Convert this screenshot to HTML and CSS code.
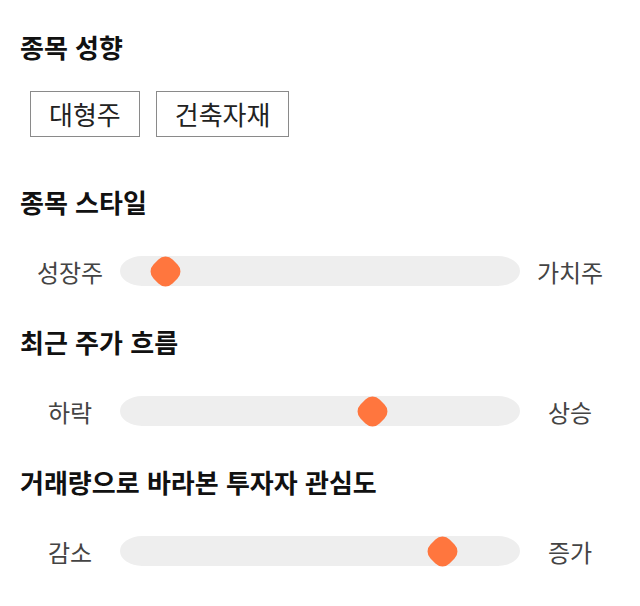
FILE: index.html
```html
<!DOCTYPE html>
<html lang="ko">
<head>
<meta charset="utf-8">
<link rel="stylesheet" href="styles.css">
</head>
<body>
<main class="page">
  <section class="group">
    <h2 class="title">종목 성향</h2>
    <div class="tags">
      <span class="tag">대형주</span>
      <span class="tag">건축자재</span>
    </div>
  </section>
  <section class="group">
    <h2 class="title">종목 스타일</h2>
    <div class="scale">
      <span class="end">성장주</span>
      <div class="track"><span class="thumb" style="left: 30px"></span></div>
      <span class="end">가치주</span>
    </div>
  </section>
  <section class="group">
    <h2 class="title">최근 주가 흐름</h2>
    <div class="scale">
      <span class="end">하락</span>
      <div class="track"><span class="thumb" style="left: 237px"></span></div>
      <span class="end">상승</span>
    </div>
  </section>
  <section class="group">
    <h2 class="title">거래량으로 바라본 투자자 관심도</h2>
    <div class="scale">
      <span class="end">감소</span>
      <div class="track"><span class="thumb" style="left: 307px"></span></div>
      <span class="end">증가</span>
    </div>
  </section>
</main>
</body>
</html>
```
FILE: styles.css
```css
* { box-sizing: border-box; }
html, body { margin: 0; padding: 0; background: #fff; }
body {
  font-family: "Noto Sans CJK KR", "Noto Sans", sans-serif;
  color: #111;
}
.page {
  width: 640px;
  padding: 30px 20px 0 20px;
  display: flex;
  flex-direction: column;
}
.group {
  display: flex;
  flex-direction: column;
  gap: 27px;
}
.group + .group { margin-top: 29px; }
.group:first-child { margin-bottom: 19px; }
.title {
  margin: 0;
  font-size: 26px;
  line-height: 34px;
  font-weight: 700;
  color: #111;
}
.tags {
  display: flex;
  gap: 16px;
  padding-left: 10px;
}
.tag {
  height: 46px;
  padding: 0 18px;
  border: 1px solid #8a8a8a;
  font-size: 26px;
  line-height: 44px;
  color: #222;
}
.scale {
  display: flex;
  align-items: center;
  height: 50px;
}
.end {
  width: 100px;
  text-align: center;
  font-size: 24px;
  color: #444;
}
.track {
  position: relative;
  width: 400px;
  height: 30px;
  background: #eeeeee;
  border-radius: 22px / 15px;
}
.thumb {
  position: absolute;
  top: 1.5px;
  width: 27px;
  height: 27px;
  margin-left: 1.5px;
  background: #ff763e;
  border-radius: 10px;
  transform: rotate(45deg);
}
```
